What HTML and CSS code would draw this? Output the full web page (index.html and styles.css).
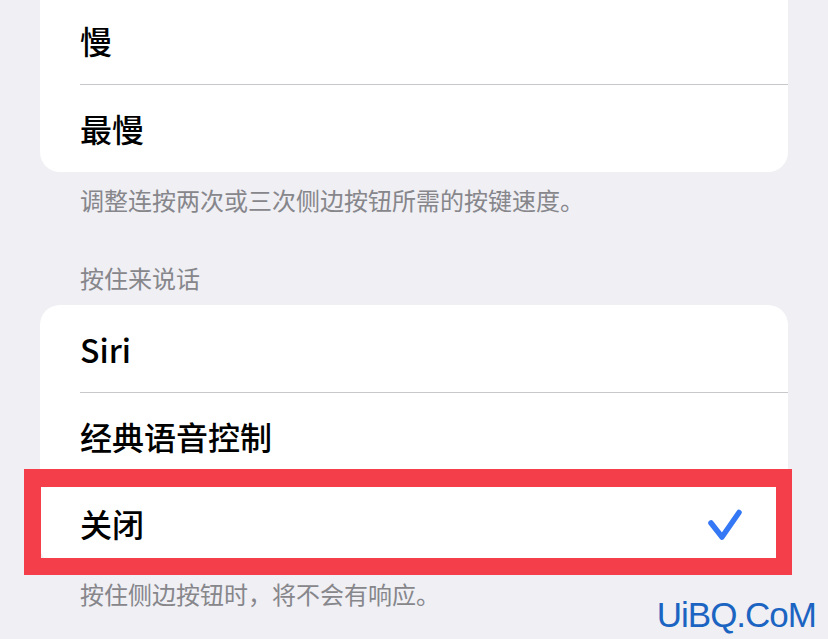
FILE: index.html
```html
<!DOCTYPE html>
<html lang="zh-CN">
<head>
    <meta charset="UTF-8">
    <title>侧边按钮</title>
    <meta name="viewport" content="width=device-width, initial-scale=1.0">
    <link rel="stylesheet" href="styles.css">
</head>
<body>
    <div class="page">
        <div class="group group-first">
            <div class="row">慢</div>
            <div class="row">最慢</div>
        </div>
        <div class="group-footer">调整连按两次或三次侧边按钮所需的按键速度。</div>

        <div class="group-header">按住来说话</div>
        <div class="group">
            <div class="row">Siri</div>
            <div class="row">经典语音控制</div>
            <div class="row row-selected">
                <span>关闭</span>
                <svg class="check" width="40" height="34" viewBox="0 0 40 34">
                    <polyline points="5,17 16,31 33,6.5" fill="none" stroke="#3478f6" stroke-width="5.5" stroke-linecap="round" stroke-linejoin="round"/>
                </svg>
                <div class="highlight"></div>
            </div>
        </div>
        <div class="group-footer">按住侧边按钮时，将不会有响应。</div>
    </div>
    <div class="watermark">UiBQ.CoM</div>
</body>
</html>
```

FILE: styles.css
```css
html, body {
    margin: 0;
    padding: 0;
}
body {
    background: #efeff4;
    font-family: "Noto Sans CJK SC", "Noto Sans", sans-serif;
    width: 828px;
    height: 639px;
    overflow: hidden;
    position: relative;
}
.page {
    padding: 0 40px;
}
.group {
    background: #ffffff;
    border-radius: 20px;
}
.group-first {
    margin-top: -4px;
    border-radius: 0 0 20px 20px;
}
.row {
    position: relative;
    height: 87px;
    display: flex;
    align-items: center;
    justify-content: space-between;
    padding: 0 40px;
    font-size: 32px;
    font-weight: 500;
    color: #000;
    box-sizing: border-box;
}
.row + .row::before {
    content: "";
    position: absolute;
    top: 0;
    left: 40px;
    right: 0;
    height: 1px;
    background: #c8c8cc;
}
.group-first .row {
    height: 88px;
}
.check {
    margin-right: 2px;
}
.highlight {
    position: absolute;
    top: -10px;
    bottom: -9px;
    left: -16px;
    right: -4px;
    border: solid #f43f4b;
    border-width: 18px 16px 17px 17px;
}
.group-footer {
    font-size: 24px;
    line-height: 32px;
    color: #86868b;
    padding: 0 40px;
    margin-top: 11px;
}
.group-header {
    font-size: 24px;
    line-height: 32px;
    color: #86868b;
    padding: 0 40px;
    margin-top: 46px;
    margin-bottom: 11px;
}
.group + .group-footer {
    margin-top: 12px;
}
.watermark {
    position: absolute;
    right: 12px;
    bottom: 4px;
    font-family: "Liberation Sans", Arial, sans-serif;
    font-size: 35px;
    color: #1b64c2;
    letter-spacing: -1px;
}
```
